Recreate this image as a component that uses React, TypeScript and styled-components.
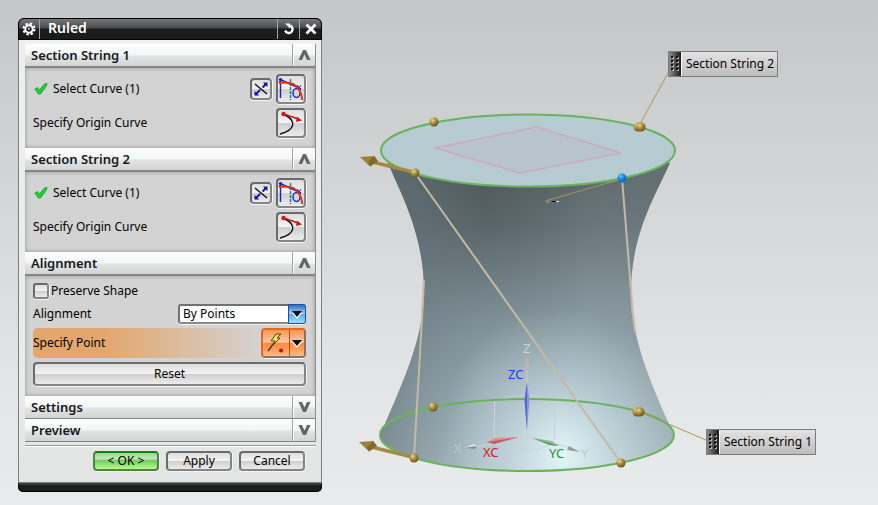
import React, { useState } from "react";
import styled, { createGlobalStyle, css } from "styled-components";

const GlobalStyle = createGlobalStyle`
  *, *::before, *::after { box-sizing: border-box; }
  body {
    margin: 0;
    color: #000;
    font: 12px/16px "Noto Sans", "Open Sans", sans-serif;
  }
  button, select, input { font: inherit; color: inherit; margin: 0; }
`;

const Page = styled.main`
  display: flex;
  align-items: flex-start;
  min-height: 100vh;
  background: linear-gradient(#c5c6c8, #d7d8da 45%, #e5e6e8 80%, #e9eaec);
`;

const Dialog = styled.section`
  flex: 0 0 304px;
  margin: 18px 0 14px 18px;
  border-radius: 6px 6px 5px 5px;
  background: #111;
  overflow: hidden;
`;

const TitleBar = styled.header`
  display: flex;
  height: 22px;
  border: 1px solid #000;
  border-radius: 6px 6px 0 0;
  color: #fff;
  background: linear-gradient(#75787a, #48494b 45%, #1b1b1b 50%, #1b1b1b);
`;

const TitleButton = styled.button<{ $side: "left" | "right" }>`
  display: grid;
  place-items: center;
  width: ${(p) => (p.$side === "left" ? 21 : 22)}px;
  padding: 0;
  border: 0;
  ${(p) => (p.$side === "left" ? "border-right" : "border-left")}: 1px solid #a5a5a5;
  background: none;
`;

const Title = styled.h1`
  flex: 1;
  margin: 0;
  padding-left: 8px;
  font-size: 14px;
  font-weight: 600;
  line-height: 18px;
`;

const DialogBody = styled.div`
  padding: 4px 5px 11px 6px;
  border: 1px solid #7d7f81;
  border-top: 0;
  background: linear-gradient(#eeefef, #e9eaea 80%, #e2e3e3);
`;

const BottomBar = styled.div`
  height: 9px;
  border: 1px solid #000;
  border-radius: 0 0 5px 5px;
  background: #1c1d1d;
  border-top: 2px solid #3a3b3b;
`;

const Groups = styled.div`
  border-right: 1px solid #8d8d8d;
`;

const GroupHeader = styled.div<{ $open: boolean }>`
  display: flex;
  height: ${(p) => (p.$open ? 24 : 23)}px;
  border-bottom: ${(p) => (p.$open ? "2px solid #858585" : "1px solid #858585")};
  background: linear-gradient(#fefefe, #f3f4f4 50%, #e2e4e5 55%, #d3d5d5);
`;

const GroupTitle = styled.h2`
  flex: 1;
  margin: 0;
  padding-left: 6px;
  font-size: 13px;
  font-weight: 600;
  line-height: 22px;
  color: #15181d;
`;

const ToggleButton = styled.button`
  display: grid;
  place-items: center;
  width: 23px;
  padding: 0;
  border: 0;
  border-left: 1px solid #a3a3a3;
  background: none;
  box-shadow: inset 1px 0 #fff;
`;

const GroupBody = styled.div`
  display: flex;
  flex-direction: column;
  gap: 4px;
  padding: 6px 9px 10px 8px;
  background: #d3d3d3;
  box-shadow: inset 0 0 4px #929292;
`;

const Row = styled.div<{ $size: "small" | "normal" | "large"; $active?: boolean }>`
  display: flex;
  align-items: center;
  justify-content: space-between;
  min-height: ${(p) => ({ small: 18, normal: 20, large: 30 })[p.$size]}px;
  ${(p) =>
    p.$active &&
    css`
      border-radius: 5px;
      background: linear-gradient(90deg, #e3a66c 25%, #d3d3d3 84%);
    `}
`;

const RowLabel = styled.span`
  display: flex;
  align-items: center;
  gap: 4px;
`;

const ButtonGroup = styled.span`
  display: flex;
  align-items: center;
  gap: 4px;
`;

const face = css`
  border: 2px solid #6b6b6b;
  border-right-color: #858585;
  border-bottom-color: #858585;
  border-radius: 4px;
  box-shadow: 0 1px #f4f4f4, 1px 0 #f4f4f4;
  background: linear-gradient(#dedede, #f3f3f3 48%, #cfcfcf 52%, #ececec);
`;

const IconButton = styled.button<{ $small?: boolean }>`
  ${face}
  display: grid;
  place-items: center;
  width: ${(p) => (p.$small ? 22 : 30)}px;
  height: ${(p) => (p.$small ? 22 : 30)}px;
  padding: 0;
`;

const PushButton = styled.button<{ $primary?: boolean; $wide?: boolean }>`
  ${face}
  width: ${(p) => (p.$wide ? "100%" : "66px")};
  height: ${(p) => (p.$wide ? 24 : 20)}px;
  padding: 0;
  line-height: 16px;
  ${(p) =>
    p.$primary &&
    css`
      border-color: #128012 #548049 #548049 #548049;
      background: linear-gradient(#9fd496, #c0e9b4 35%, #73cc62 48%, #b4fb8d);
    `}
`;

const CheckLabel = styled.label`
  display: flex;
  align-items: center;
  gap: 2px;
`;

const CheckBox = styled.input`
  ${face}
  appearance: none;
  width: 16px;
  height: 16px;
  border-radius: 3px;
  &:checked { background: #4f9ee8; }
`;

const SelectFrame = styled.span`
  display: grid;
  width: 128px;
  height: 20px;
`;

const Select = styled.select`
  grid-area: 1 / 1;
  appearance: none;
  width: 100%;
  padding: 0 20px 0 3px;
  border: 2px solid #707070;
  border-right-color: #8a8a8a;
  border-bottom-color: #8a8a8a;
  border-radius: 3px;
  background: #fff;
  box-shadow: 0 1px #f4f4f4;
`;

const SelectArrow = styled.span`
  grid-area: 1 / 1;
  justify-self: end;
  display: grid;
  place-items: center;
  width: 18px;
  border: 1px solid #1652a0;
  border-radius: 0 3px 3px 0;
  background: linear-gradient(#2b6fc4, #a8cdf3 48%, #5da9ee 52%, #9ae2ff);
  pointer-events: none;
`;

const SplitButton = styled.span`
  display: flex;
  width: 45px;
  height: 30px;
  border: 2px solid #e36a1c;
  border-right-color: #8e7261;
  border-bottom-color: #8e7261;
  border-radius: 4px;
  box-shadow: 0 1px #f4f4f4;
  overflow: hidden;
`;

const SplitPart = styled.button<{ $menu?: boolean }>`
  display: grid;
  place-items: center;
  flex: ${(p) => (p.$menu ? "0 0 15px" : "1")};
  padding: 0;
  border: 0;
  border-left: ${(p) => (p.$menu ? "1px solid #b44b0a" : "0")};
  background: linear-gradient(#ff9450, #ffc8a3 46%, #ff8a3e 52%, #ffb983);
`;

const Actions = styled.footer`
  display: flex;
  justify-content: flex-end;
  gap: 7px;
  margin-top: 3px;
  padding: 5px 11px 0 0;
  border-top: 1px solid #999;
  box-shadow: inset 0 1px #fff;
`;

const STAGE_W = 556;
const STAGE_H = 505;

const Viewport = styled.div`
  position: relative;
  flex: 1;
  min-width: 0;
  aspect-ratio: ${STAGE_W} / ${STAGE_H};
`;

const Drawing = styled.svg`
  display: block;
  width: 100%;
  height: 100%;
  font-family: "Noto Sans", sans-serif;
  font-size: 13px;
`;

const Tag = styled.div<{ $x: number; $y: number }>`
  position: absolute;
  left: ${(p) => (p.$x / STAGE_W) * 100}%;
  top: ${(p) => (p.$y / STAGE_H) * 100}%;
  display: flex;
  width: 110px;
  height: 26px;
  border: 1px solid #7c7c7c;
  background: linear-gradient(#e3e3e3, #bdbdbd);
  line-height: 23px;
  white-space: nowrap;
`;

const TagGrip = styled.span`
  display: grid;
  place-items: center;
  width: 13px;
  margin-right: 4px;
  border-right: 1px solid #fff;
  background: linear-gradient(90deg, #8c8c8c, #1a1a1a);
`;

const Chevron = ({ up }: { up: boolean }) => (
  <svg width="13" height="12" viewBox="0 0 13 12" aria-hidden="true">
    <path d={up ? "M.5 11 5 1h3l4.500 10H9L6.500 5.500 4 11z" : "M.5 1H4l2.500 5.500L9 1h3.500L8 11H5z"} fill="#666" />
  </svg>
);

const GearIcon = () => (
  <svg width="14" height="14" viewBox="0 0 14 14" aria-hidden="true">
    <circle cx="7" cy="7" r="5.4" fill="none" stroke="#fff" strokeWidth="2.2" strokeDasharray="2.4 1.84" />
    <circle cx="7" cy="7" r="3.7" fill="none" stroke="#fff" strokeWidth="2" />
    <circle cx="7" cy="7" r="1" fill="#ccc" />
  </svg>
);

const ResetIcon = () => (
  <svg width="12" height="12" viewBox="0 0 12 12" aria-hidden="true">
    <path d="M6.500 2.500a3.800 3.800 0 1 1-4.300 5" fill="none" stroke="#fff" strokeWidth="2.400" />
    <path d="M2 .5h5v5z" fill="#fff" />
  </svg>
);

const CloseIcon = () => (
  <svg width="12" height="12" viewBox="0 0 12 12" aria-hidden="true">
    <path d="m1.500 1.500 9 9M10.500 1.500l-9 9" stroke="#fff" strokeWidth="2.800" />
  </svg>
);

const TickIcon = () => (
  <svg width="16" height="14" viewBox="0 0 16 14" aria-hidden="true">
    <path d="m2 7 2.500-1.500L6.500 8l5-6 2.500-.5-1 3L7.500 12h-2z" fill="#1fd43c" stroke="#18a530" />
  </svg>
);

const ReverseIcon = () => (
  <svg width="16" height="16" viewBox="0 0 16 16" aria-hidden="true">
    <path d="m2 3 12 10" stroke="#111" strokeWidth="1.400" />
    <path d="m3 13 4-4M9.500 6.500 13 3" stroke="#0a12a8" strokeWidth="1.800" />
    <path d="M14.500 1.500V6L10 1.500zM1.500 14.500V10L6 14.500z" fill="#0a12a8" />
  </svg>
);

const CurveIcon = () => (
  <svg width="26" height="26" viewBox="0 0 26 26" aria-hidden="true">
    <path d="M2.500 2v20M1 3l22 10M1 6l3-3" fill="none" stroke="#1420d0" strokeWidth="1.400" />
    <path d="M12.500 3v21" stroke="#008585" strokeWidth="1.400" strokeDasharray="3 1" />
    <ellipse cx="18.500" cy="17" rx="3.500" ry="4.500" fill="none" stroke="#1420d0" strokeWidth="1.400" />
    <path d="m20 13 3-4m-4 0 4 5" stroke="#1420d0" />
    <path d="M1 7c6-1 10-1 14 1 6 3 8 8 9.500 16" fill="none" stroke="#e33212" strokeWidth="2" />
  </svg>
);

const OriginIcon = () => (
  <svg width="26" height="26" viewBox="0 0 26 26" aria-hidden="true">
    <path d="M7 5c12 6 10 15-5 19" fill="none" stroke="#111" strokeWidth="1.400" />
    <path d="m6 4 14 5" stroke="#c91616" strokeWidth="1.400" />
    <path d="m19 6.500 5 4-6 1.500z" fill="#d41515" />
    <circle cx="5.500" cy="4" r="2.200" fill="#d41515" />
  </svg>
);

const BoltIcon = () => (
  <svg width="22" height="24" viewBox="0 0 22 24" aria-hidden="true">
    <path d="M11 3h5l-4 4h3l-7 7 2-4H6z" fill="#f2e64a" stroke="#49431e" />
    <path d="m9 12-6 8" stroke="#49431e" strokeWidth="1.500" />
    <circle cx="16" cy="19.500" r="2" fill="#d90000" />
  </svg>
);

const DownArrow = () => (
  <svg width="12" height="10" viewBox="0 0 12 10" aria-hidden="true">
    <path d="M1 4h10L6 10z" fill="#fff" />
    <path d="M1 2h10L6 8z" fill="#111" />
  </svg>
);

const GripDots = () => (
  <svg width="10" height="18" viewBox="0 0 10 18" aria-hidden="true">
    {[1, 5, 9, 13].map((y) =>
      [1, 6].map((x) => (
        <g key={`${x}-${y}`}>
          <rect x={x + 1} y={y + 1} width="2" height="2" fill="#b5b5b5" />
          <rect x={x} y={y} width="2" height="2" fill="#111" />
        </g>
      ))
    )}
  </svg>
);

interface GroupProps {
  title: string;
  initiallyOpen?: boolean;
  children?: React.ReactNode;
}

function Group({ title, initiallyOpen = false, children }: GroupProps) {
  const [open, setOpen] = useState(initiallyOpen);
  return (
    <>
      <GroupHeader $open={open}>
        <GroupTitle>{title}</GroupTitle>
        <ToggleButton type="button" aria-label={title} aria-expanded={open} onClick={() => setOpen(!open)}>
          <Chevron up={open} />
        </ToggleButton>
      </GroupHeader>
      {open && children && <GroupBody>{children}</GroupBody>}
    </>
  );
}

const CurveRows = () => (
  <>
    <Row $size="large">
      <RowLabel>
        <TickIcon />
        Select Curve (1)
      </RowLabel>
      <ButtonGroup>
        <IconButton type="button" $small aria-label="Reverse Direction"><ReverseIcon /></IconButton>
        <IconButton type="button" aria-label="Curve"><CurveIcon /></IconButton>
      </ButtonGroup>
    </Row>
    <Row $size="large">
      <RowLabel>Specify Origin Curve</RowLabel>
      <IconButton type="button" aria-label="Specify Origin Curve"><OriginIcon /></IconButton>
    </Row>
  </>
);

const Ball = ({ x, y, blue }: { x: number; y: number; blue?: boolean }) => (
  <circle cx={x} cy={y} r="4.500" fill={blue ? "url(#blueBall)" : "url(#goldBall)"} />
);

const GoldArrow = ({ x, y }: { x: number; y: number }) => (
  <g transform={`translate(${x} ${y})`}>
    <path d="m0 1.500-2-4-40-10-1 3.500z" fill="#a48a43" />
    <path d="m-56-16 14-1 4 5-8 5.500z" fill="#9a823c" />
    <path d="m-42-17 4 5-8 5.500-2-4z" fill="#7f6a2c" />
  </g>
);

const SILHOUETTE =
  "M388 163C402 196 424 235 424 292C424 335 405 378 384 426A147 36 0 1 0 670 426C648 378 631 335 631 292C631 235 655 196 670 163L528 150Z";

const Model = () => (
  <Drawing viewBox={`322 0 ${STAGE_W} ${STAGE_H}`} role="img" aria-label="Ruled surface between two section strings">
    <defs>
      <linearGradient id="bodyShade" gradientUnits="userSpaceOnUse" x1="0" y1="180" x2="0" y2="471">
        <stop offset="0" stopColor="#4d5659" />
        <stop offset="0.150" stopColor="#566165" />
        <stop offset="0.400" stopColor="#75858b" />
        <stop offset="0.700" stopColor="#98aab1" />
        <stop offset="1" stopColor="#b5c9d0" />
      </linearGradient>
      <linearGradient id="sideShade" gradientUnits="userSpaceOnUse" x1="381" y1="0" x2="674" y2="0">
        <stop offset="0" stopColor="#66767b" stopOpacity="0.700" />
        <stop offset="0.350" stopColor="#6d7d82" stopOpacity="0.100" />
        <stop offset="0.700" stopColor="#b9cad0" stopOpacity="0.180" />
        <stop offset="1" stopColor="#8b9b9f" stopOpacity="0.350" />
      </linearGradient>
      <radialGradient id="glow" gradientUnits="userSpaceOnUse" cx="0" cy="0" r="1" gradientTransform="translate(562 455) rotate(-10) scale(120 150)">
        <stop offset="0" stopColor="#e6f8fb" stopOpacity="0.950" />
        <stop offset="0.400" stopColor="#d5e8ee" stopOpacity="0.550" />
        <stop offset="1" stopColor="#c0d3da" stopOpacity="0" />
      </radialGradient>
      <radialGradient id="goldBall" cx="0.350" cy="0.300" r="0.700">
        <stop offset="0" stopColor="#f0d98b" />
        <stop offset="0.400" stopColor="#b69a49" />
        <stop offset="1" stopColor="#6a5520" />
      </radialGradient>
      <radialGradient id="blueBall" cx="0.350" cy="0.300" r="0.700">
        <stop offset="0" stopColor="#73c8ff" />
        <stop offset="0.400" stopColor="#1692ee" />
        <stop offset="1" stopColor="#0768b8" />
      </radialGradient>
    </defs>

    <path d={SILHOUETTE} fill="url(#bodyShade)" />
    <path d={SILHOUETTE} fill="url(#sideShade)" />
    <path d={SILHOUETTE} fill="url(#glow)" />
    <ellipse cx="528" cy="150.500" rx="147" ry="36" fill="#b7cbd2" stroke="#68b35c" strokeWidth="2" />
    <path d="m435 148 102-21 84 26-101 20z" fill="#b8c5ce" stroke="#d0a9b7" strokeWidth="1.500" />

    <g fill="none" stroke="#c9d2d5">
      <path d="M494.500 400v40M554.500 400v40M527 436v-66M527 436l-56 12M527 436l44 12" />
      <path d="m494 400 33-6 27 6M487 440q40 18 64 4" strokeOpacity="0.700" />
    </g>
    <ellipse cx="527" cy="435" rx="147" ry="36" fill="none" stroke="#68b35c" strokeWidth="2" />
    <g fill="none" stroke="#c3baa5" strokeWidth="2">
      <path d="m415 173 206 290M622 178l9 112q1 22 4 42M414 458l8-140 2-38" />
    </g>

    <path d="m527 382 2.500 18-2.500 30-2.500-30z" fill="#8394e0" />
    <path d="M527 382v48l-2.500-30z" fill="#5469d2" />
    <path d="m527 356 3.500 15h-7z" fill="#b9b6b6" />
    <path d="m519 437-24 1-8 4 7 2z" fill="#df8d90" />
    <path d="m519 437-32 5 7 2z" fill="#b96368" />
    <path d="m532 438 20 3 7 5-9-1z" fill="#8bc193" />
    <path d="m532 438 27 8-9-1z" fill="#538e5a" />
    <path d="m464 448 10-4 3 2-2 3z" fill="#e0e1e1" />
    <path d="m464 448 13-2-2 3z" fill="#888" />
    <path d="m580 452-11-6-2 4z" fill="#999b9c" />
    <g>
      <text x="523" y="353" fill="#cdd2d4">Z</text>
      <text x="508" y="379" fill="#163fef">ZC</text>
      <text x="483" y="457" fill="#d32027">XC</text>
      <text x="549" y="458" fill="#26923a">YC</text>
      <text x="581" y="458" fill="#c1c9cc">Y</text>
      <text x="454" y="453" fill="#b9c6cb">X</text>
    </g>

    <path d="m640 124 28-51M640 412l66 28M622 179l-77 22" fill="none" stroke="#a99759" />
    <path d="m545 202 5-1-1 2z" fill="#a99759" />
    <path d="M552 201.500h4" stroke="#111" />
    <path d="M556 201.500h3" stroke="#eee" />
    <GoldArrow x={416} y={173} />
    <GoldArrow x={415} y={458} />
    <Ball x={434} y={122} />
    <Ball x={638} y={127} />
    <Ball x={641} y={127} />
    <Ball x={415} y={173} />
    <Ball x={622} y={178} blue />
    <Ball x={433} y={407} />
    <Ball x={637} y={412} />
    <Ball x={640} y={412} />
    <Ball x={414} y={458} />
    <Ball x={621} y={463} />
  </Drawing>
);

export default function App() {
  return (
    <>
      <GlobalStyle />
      <Page>
        <Dialog aria-labelledby="dialog-title">
          <TitleBar>
            <TitleButton type="button" $side="left" aria-label="Options"><GearIcon /></TitleButton>
            <Title id="dialog-title">Ruled</Title>
            <TitleButton type="button" $side="right" aria-label="Reset dialog"><ResetIcon /></TitleButton>
            <TitleButton type="button" $side="right" aria-label="Close"><CloseIcon /></TitleButton>
          </TitleBar>
          <DialogBody>
            <Groups>
              <Group title="Section String 1" initiallyOpen><CurveRows /></Group>
              <Group title="Section String 2" initiallyOpen><CurveRows /></Group>
              <Group title="Alignment" initiallyOpen>
                <Row $size="small">
                  <CheckLabel>
                    <CheckBox type="checkbox" />
                    Preserve Shape
                  </CheckLabel>
                </Row>
                <Row $size="normal">
                  <label htmlFor="alignment">Alignment</label>
                  <SelectFrame>
                    <Select id="alignment"><option>By Points</option></Select>
                    <SelectArrow><DownArrow /></SelectArrow>
                  </SelectFrame>
                </Row>
                <Row $size="large" $active>
                  <RowLabel>Specify Point</RowLabel>
                  <SplitButton>
                    <SplitPart type="button" aria-label="Infer point"><BoltIcon /></SplitPart>
                    <SplitPart type="button" $menu aria-label="Point types"><DownArrow /></SplitPart>
                  </SplitButton>
                </Row>
                <PushButton type="button" $wide>Reset</PushButton>
              </Group>
              <Group title="Settings" />
              <Group title="Preview" />
            </Groups>
            <Actions>
              <PushButton type="button" $primary>&lt; OK &gt;</PushButton>
              <PushButton type="button">Apply</PushButton>
              <PushButton type="button">Cancel</PushButton>
            </Actions>
          </DialogBody>
          <BottomBar />
        </Dialog>
        <Viewport>
          <Model />
          <Tag $x={346} $y={51}><TagGrip><GripDots /></TagGrip>Section String 2</Tag>
          <Tag $x={384} $y={429}><TagGrip><GripDots /></TagGrip>Section String 1</Tag>
        </Viewport>
      </Page>
    </>
  );
}
